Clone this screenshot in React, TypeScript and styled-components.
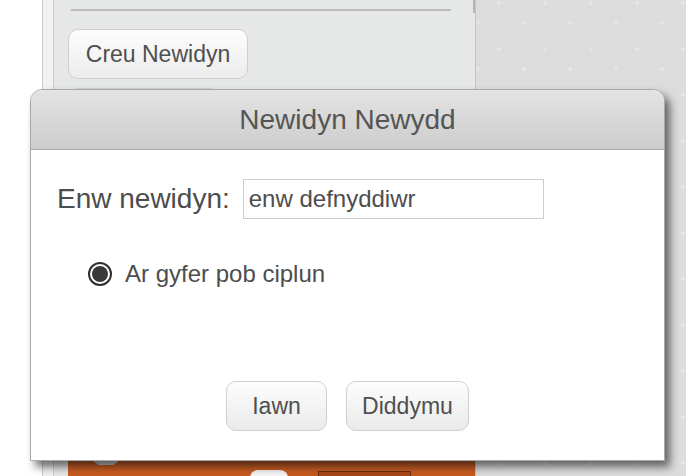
import React from "react";
import styled, { createGlobalStyle } from "styled-components";

const GlobalStyle = createGlobalStyle`
  html, body { margin: 0; padding: 0; background: #ffffff; }
  body { font-family: "Liberation Sans", Arial, Helvetica, sans-serif; }
  * { box-sizing: border-box; }
`;

const plusSvg =
  "data:image/svg+xml;utf8," +
  encodeURIComponent(
    "<svg xmlns='http://www.w3.org/2000/svg' width='46' height='46'><g fill='#e6e6e6'>" +
      "<rect x='30.5' y='12.3' width='5' height='1.5'/><rect x='32.3' y='10.5' width='1.5' height='5'/>" +
      "<rect x='9.5' y='32.3' width='5' height='1.5'/><rect x='11.3' y='30.5' width='1.5' height='5'/>" +
      "</g></svg>"
  );

const Page = styled.div`
  position: relative;
  width: 686px;
  height: 476px;
  overflow: hidden;
  display: flex;
  background: #ffffff;
`;

const Gutter = styled.div`
  width: 42px;
  flex: none;
  background: #ffffff;
`;

const Strip = styled.div`
  width: 12px;
  flex: none;
  background: #f1f1f1;
  border-left: 1px solid #cbcbcb;
  border-right: 1px solid #cbcbcb;
`;

const Palette = styled.div`
  width: 422px;
  flex: none;
  background: #e6e7e7;
  border-right: 1px solid #c2c2c2;
  display: flex;
  flex-direction: column;
  overflow: hidden;
  position: relative;
`;

const ScrollThumb = styled.div`
  position: absolute;
  right: 0;
  top: 0;
  width: 2px;
  height: 13px;
  background: #b5b5b5;
`;

const Divider = styled.div`
  margin: 9px 24px 0 17px;
  height: 2px;
  background: #bcbcbc;
`;

const PaletteButton = styled.div<{ $w: number }>`
  width: ${(p) => p.$w}px;
  height: 50px;
  margin-left: 14px;
  border: 1px solid #cfcfcf;
  border-radius: 10px;
  background: linear-gradient(#fdfdfd, #ececec);
  color: #4f4f4f;
  font-size: 23px;
  display: flex;
  align-items: center;
  justify-content: center;
`;

const Gap = styled.div<{ $h: number }>`
  height: ${(p) => p.$h}px;
  flex: none;
`;

const Block = styled.div`
  margin-top: auto;
  margin-left: 14px;
  height: 15px;
  flex: none;
  position: relative;
  background: linear-gradient(#b2582a, #c95f25 30%, #c65a20);
  display: flex;
  align-items: flex-start;
`;

const Notch = styled.div`
  position: absolute;
  left: 25px;
  top: 0;
  width: 26px;
  height: 4px;
  background: #c7c7c7;
  clip-path: polygon(0 0, 100% 0, 78% 100%, 22% 100%);
`;

const Oval = styled.div`
  position: absolute;
  left: 182px;
  top: 9px;
  width: 38px;
  height: 16px;
  border-radius: 8px;
  background: #f4f4f4;
`;

const SlotBox = styled.div`
  position: absolute;
  left: 250px;
  top: 10px;
  width: 93px;
  height: 14px;
  background: #a9471a;
  border: 1px solid #6e2e0c;
`;

const Stage = styled.div`
  flex: 1;
  background-color: #dcdcdc;
  background-image: url("${plusSvg}");
  background-position: -10px -10px;
`;

const Dialog = styled.div`
  position: absolute;
  left: 30px;
  top: 89px;
  width: 635px;
  height: 372px;
  border: 1px solid #a9a9a9;
  border-radius: 12px 12px 0 0;
  background: #ffffff;
  box-shadow: 5px 6px 9px rgba(0, 0, 0, 0.55);
  display: flex;
  flex-direction: column;
`;

const Header = styled.div`
  height: 60px;
  flex: none;
  border-radius: 11px 11px 0 0;
  background: linear-gradient(#e3e3e3, #cdcdcd);
  border-bottom: 1px solid #ababab;
  display: flex;
  align-items: center;
  justify-content: center;
  color: #555555;
  font-size: 28px;
`;

const Body = styled.div`
  flex: 1;
  display: flex;
  flex-direction: column;
  padding: 29px 0 0 26px;
  color: #4d4d4d;
`;

const NameRow = styled.div`
  display: flex;
  align-items: center;
  gap: 13px;
`;

const Label = styled.span`
  font-size: 28px;
`;

const TextInput = styled.div`
  width: 301px;
  height: 40px;
  border: 1px solid #cccccc;
  font-size: 24px;
  padding-left: 5px;
  display: flex;
  align-items: center;
  color: #4d4d4d;
`;

const RadioRow = styled.div`
  display: flex;
  align-items: center;
  gap: 13px;
  margin: 41px 0 0 31px;
  font-size: 24px;
`;

const Radio = styled.span`
  width: 24px;
  height: 24px;
  border-radius: 50%;
  border: 2px solid #2e2e2e;
  background: #ffffff;
  display: flex;
  align-items: center;
  justify-content: center;
  &::after {
    content: "";
    width: 16px;
    height: 16px;
    border-radius: 50%;
    background: #3a3a3a;
  }
`;

const Buttons = styled.div`
  margin-top: auto;
  margin-bottom: 29px;
  margin-left: -26px;
  display: flex;
  justify-content: center;
  gap: 19px;
`;

const DialogButton = styled.div<{ $w: number }>`
  width: ${(p) => p.$w}px;
  height: 50px;
  border: 1px solid #cfcfcf;
  border-radius: 10px;
  background: linear-gradient(#fdfdfd, #e9eaea);
  color: #4f4f4f;
  font-size: 23px;
  display: flex;
  align-items: center;
  justify-content: center;
`;

export default function App() {
  return (
    <>
      <GlobalStyle />
      <Page>
        <Gutter />
        <Strip />
        <Palette>
          <ScrollThumb />
          <Divider />
          <Gap $h={18} />
          <PaletteButton $w={180}>Creu Newidyn</PaletteButton>
          <Gap $h={9} />
          <PaletteButton $w={152}>Dileu</PaletteButton>
          <Block>
            <Notch />
            <Oval />
            <SlotBox />
          </Block>
        </Palette>
        <Stage />
        <Dialog>
          <Header>Newidyn Newydd</Header>
          <Body>
            <NameRow>
              <Label>Enw newidyn:</Label>
              <TextInput>enw defnyddiwr</TextInput>
            </NameRow>
            <RadioRow>
              <Radio />
              <span>Ar gyfer pob ciplun</span>
            </RadioRow>
            <Buttons>
              <DialogButton $w={101}>Iawn</DialogButton>
              <DialogButton $w={123}>Diddymu</DialogButton>
            </Buttons>
          </Body>
        </Dialog>
      </Page>
    </>
  );
}
